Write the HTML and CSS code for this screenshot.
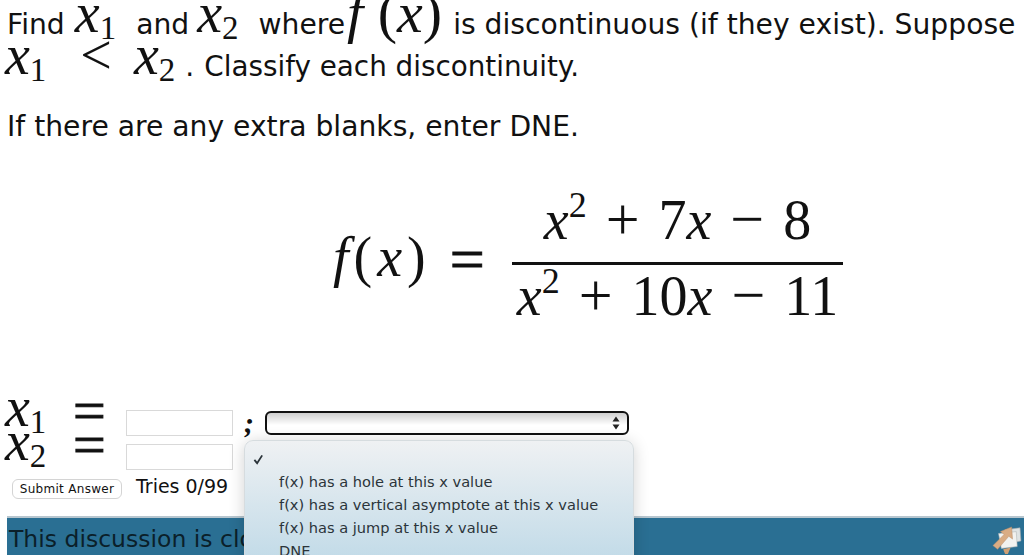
FILE: index.html
```html
<!DOCTYPE html>
<html lang="en">
<head>
<meta charset="utf-8">
<title>Discontinuities</title>
<link rel="stylesheet" href="styles.css">
</head>
<body>
<main class="page">
  <p class="line line-one"><span>Find</span><span class="m first"><i>x</i><sub>1</sub></span><span class="word-and">and</span><span class="m second-var"><i>x</i><sub>2</sub></span><span class="word-where">where</span><span class="m fx"><i>f</i> (<i>x</i>)</span><span class="word-rest">is discontinuous (if they exist). Suppose</span></p>
  <p class="line line-two"><span class="m"><i>x</i><sub>1</sub></span><span class="m lt">&lt;</span><span class="m"><i>x</i><sub>2</sub></span><span class="dot">.</span><span class="word-classify">Classify each discontinuity.</span></p>
  <p class="line line-three">If there are any extra blanks, enter DNE.</p>
  <div class="formula">
    <span class="lhs"><i>f</i>(<i>x</i>) <span class="big-eq">=</span></span>
    <span class="fraction">
      <span class="num"><i>x</i><sup>2</sup> <span class="op">+</span> 7<i>x</i> <span class="op">−</span> 8</span>
      <span class="den"><i>x</i><sup>2</sup> <span class="op">+</span> 10<i>x</i> <span class="op">−</span> 11</span>
    </span>
  </div>
  <div class="answers">
    <div class="answer-row">
      <span class="m var"><i>x</i><sub>1</sub></span><span class="eq">=</span><span class="field"></span><span class="semi">;</span>
      <span class="select"><svg class="updown" viewBox="0 0 8 14"><path d="M4 0.5 7.5 5.5H.5zM4 13.5 .5 8.5H7.5z"/></svg></span>
    </div>
    <div class="answer-row second">
      <span class="m var"><i>x</i><sub>2</sub></span><span class="eq">=</span><span class="field"></span>
    </div>
    <div class="submit-row">
      <span class="submit">Submit Answer</span><span class="tries">Tries 0/99</span>
    </div>
  </div>
  <div class="discussion">
    <span>This discussion is closed.</span>
    <svg class="mail-icon" viewBox="0 0 34 30">
      <path d="M16 4 32 2 33 16 18 19z" fill="#dfe3e4" stroke="#9fa7aa" stroke-width=".6"/>
      <path d="M9 8 28 6 29 22 12 24z" fill="#f2f2f0" stroke="#aeb3b3" stroke-width=".6"/>
      <path d="M14 25 22 23 19 30 16 30z" fill="#cf9f74"/>
      <path d="M3 21 15 9 11 6 23 1 24 14 20 11 8 25z" fill="#d9ac84" stroke="#b78d69" stroke-width=".5"/>
    </svg>
  </div>
  <div class="menu">
    <div class="menu-item check"><svg class="tick" viewBox="0 0 12 12"><path d="M1.5 6.5 4.5 10 10 1.5" fill="none" stroke="#2b343a" stroke-width="2"/></svg></div>
    <div class="menu-item">f(x) has a hole at this x value</div>
    <div class="menu-item">f(x) has a vertical asymptote at this x value</div>
    <div class="menu-item">f(x) has a jump at this x value</div>
    <div class="menu-item">DNE</div>
  </div>
</main>
</body>
</html>
```

FILE: styles.css
```css
html, body {
  margin: 0;
  padding: 0;
  background: #fff;
}
.page {
  position: relative;
  width: 1024px;
  height: 555px;
  overflow: hidden;
  font-family: "DejaVu Sans", sans-serif;
  color: #111;
}
.line {
  margin: 0;
  padding-left: 7px;
  white-space: nowrap;
  font-size: 28.2px;
  box-sizing: border-box;
}
.line-one { height: 43px; line-height: 50px; }
.line-two { height: 50px; line-height: 48px; padding-left: 5px; }
.line-three { height: 83px; line-height: 68px; }
.m {
  font-family: "Liberation Serif", serif;
  font-size: 56px;
  line-height: 0;
  vertical-align: 2px;
}
.m sub {
  font-size: 33px;
  line-height: 0;
  vertical-align: -7px;
  font-style: normal;
}
.first { margin-left: 10px; }
.word-and { margin-left: 20px; }
.second-var { margin-left: 8px; }
.word-where { margin-left: 20px; }
.word-rest { margin-left: 11px; }
.fx { margin-left: 2px; font-size: 58px; }
.lt { margin: 0 22px 0 34px; }
.dot { margin-left: 10px; }
.word-classify { margin-left: 10px; font-size: 27.8px; }

.formula {
  display: flex;
  align-items: center;
  height: 170px;
  padding-left: 333px;
  font-family: "Liberation Serif", serif;
  font-size: 56px;
}
.lhs { white-space: nowrap; width: 179px; letter-spacing: 5px; margin-bottom: 4px; }
.big-eq {
  font-size: 62px;
  letter-spacing: 0;
  vertical-align: -4px;
  -webkit-text-stroke: 1px #111;
}
.fraction {
  display: flex;
  flex-direction: column;
  align-items: center;
  width: 331px;
  white-space: nowrap;
  word-spacing: 5px;
}
.op { font-size: 60px; line-height: 0; }
.num { border-bottom: 3px solid #111; width: 100%; text-align: center; height: 83px; line-height: 82px; }
.den { height: 78px; line-height: 62px; }
.fraction sup {
  font-size: 36px;
  line-height: 0;
  vertical-align: 22px;
}
.answers {
  margin-top: 60px;
  padding-left: 5px;
}
.answer-row {
  display: flex;
  align-items: center;
  height: 34px;
}
.var { width: 68px; margin-bottom: 32px; line-height: 34px; }
.eq {
  width: 53px;
  margin-bottom: 24px;
  font-family: "Liberation Serif", serif;
  font-size: 58px;
  line-height: 34px;
  -webkit-text-stroke: 1px #111;
}
.field {
  width: 105px;
  height: 24px;
  border: 1px solid #d9d9d9;
  background: #fff;
}
.semi {
  width: 32px;
  text-align: center;
  font-family: "Liberation Serif", serif;
  font-style: italic;
  font-weight: bold;
  font-size: 30px;
}
.select {
  display: flex;
  align-items: center;
  justify-content: flex-end;
  box-sizing: border-box;
  width: 364px;
  height: 24px;
  border: 2px solid #111;
  border-radius: 6px;
  padding-right: 7px;
  background: linear-gradient(#cfcfcf, #fff 60%);
}
.updown { width: 8px; height: 14px; fill: #222; }
.submit-row {
  display: flex;
  align-items: center;
  height: 30px;
  padding-left: 7px;
}
.submit {
  box-sizing: border-box;
  width: 110px;
  height: 20px;
  border: 1px solid #d4d4d4;
  border-radius: 6px;
  font-size: 12px;
  line-height: 18px;
  text-align: center;
  letter-spacing: .3px;
  background: #fff;
}
.tries {
  margin-left: 14px;
  margin-bottom: 6px;
  font-size: 19px;
}
.discussion {
  position: absolute;
  left: 7px;
  right: 0;
  top: 516px;
  height: 39px;
  background: #2a6f93;
  border-top: 2px solid #b7c6cf;
  box-sizing: border-box;
  font-size: 23.5px;
  line-height: 43px;
  padding-left: 2px;
  color: #0b1f2a;
  white-space: nowrap;
}
.mail-icon {
  position: absolute;
  right: 2px;
  top: 8px;
  width: 32px;
  height: 28px;
}
.menu {
  position: absolute;
  left: 244px;
  top: 440px;
  width: 390px;
  height: 130px;
  box-sizing: border-box;
  border-radius: 9px;
  border: 1px solid #d6dcdf;
  padding-top: 7px;
  background: linear-gradient(#eff1f3, #bed9e7);
  box-shadow: 0 2px 16px rgba(0, 0, 0, .18);
  color: #2b343a;
  font-size: 14.6px;
}
.menu-item {
  height: 23px;
  line-height: 23px;
  padding-left: 34px;
  white-space: nowrap;
}
.check { padding-left: 8px; height: 22px; }
.tick { width: 11px; height: 11px; }
```
